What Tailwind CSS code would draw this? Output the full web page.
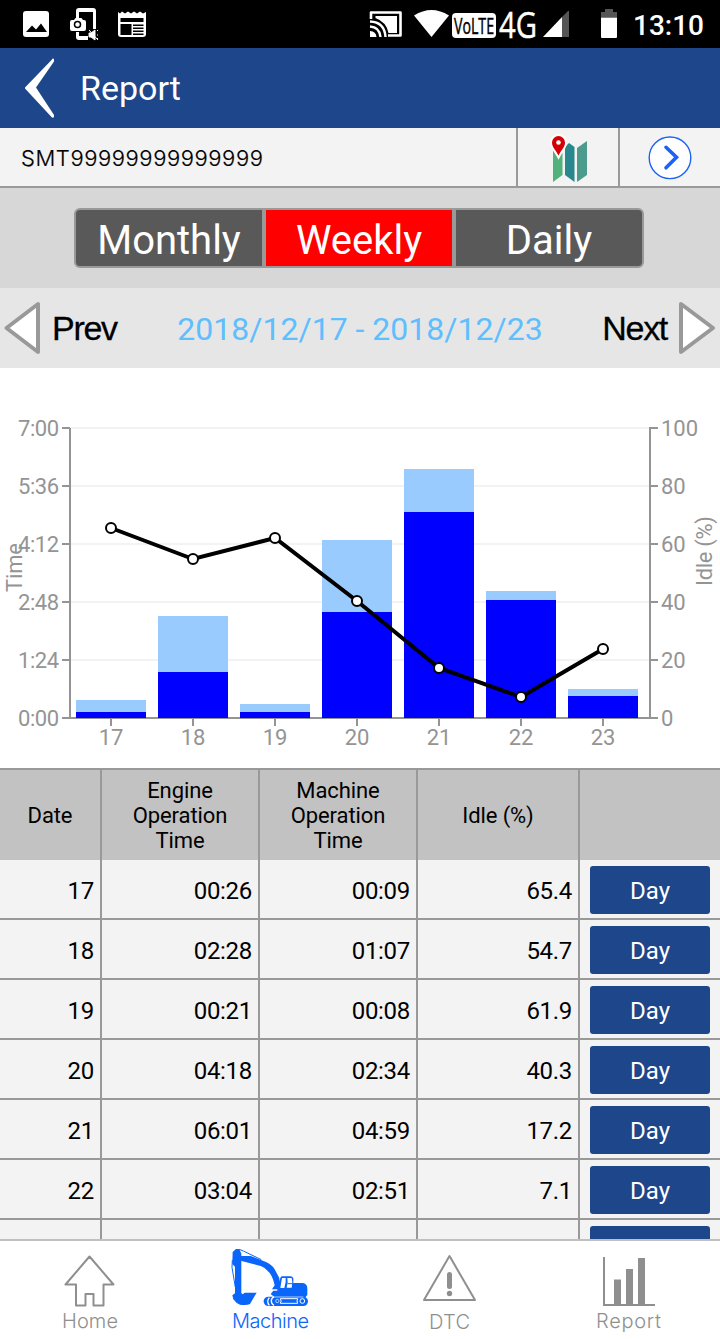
<!DOCTYPE html>
<html lang="en">
<head>
  <meta charset="UTF-8" />
  <meta name="viewport" content="width=device-width, initial-scale=1.0"/>
  <script src="https://cdn.jsdelivr.net/npm/@tailwindcss/browser@4"></script>
  <title>Report</title>
</head>

<body class="bg-white h-[1339px] w-[720px] overflow-hidden flex flex-col font-['Roboto',sans-serif] text-black">

  <!-- status bar -->
  <div class="h-12 shrink-0 bg-black text-white">
    <svg class="block w-[720px] h-12" viewBox="0 0 720 48" fill="#fff">
      <rect x="23" y="11" width="26" height="26" rx="3"/>
      <path d="M26 32l6-6.500 4 4 5-6 6 8.500z" fill="#000"/>
      <path d="M76 18V11q0-3 3-3h14q3 0 3 3v18h-3V12H79v6zM76 32h3v4h9v4h-9q-3 0-3-3z"/>
      <path d="M72 20h2l1.500-2h6l1.500 2h1q2 0 2 2v7q0 2-2 2H72q-2 0-2-2v-7q0-2 2-2z"/>
      <circle cx="77.500" cy="24.500" r="3" fill="none" stroke="#000" stroke-width="1.500"/>
      <path d="M89 33h2l4-3v10l-4-3h-2zM97 31l1-1M97 35h1M97 38l1 1M89 30l9 10" stroke="#fff" stroke-width="1"/>
      <path d="M118 12l2 1.500 2-2 3 2 3-2 3 2 3-2 3 2 3-2 3 2 3-1.500V34q0 3-3 3h-22q-3 0-3-3z"/>
      <path d="M120.500 18h23v4h-23zM120.500 24h11v11h-11zM133 24.500h10.500v1.500H133zM133 27.500h10.500V29H133zM133 30.500h10.500V32H133zM133 33.500h10.500V35H133z" fill="#000"/>
      <!-- cast -->
      <path d="M371 19v-6.500h29.500v23H388" fill="none" stroke="#fff" stroke-width="2.600" stroke-linejoin="round"/>
      <path d="M375.500 18v-2H397v17h-8.500q-2-11-13-15z"/>
      <path d="M370 21.500q14.500.5 15.500 15.500M370 26.500q9.500.5 10.500 10.500" fill="none" stroke="#fff" stroke-width="2.400"/>
      <path d="M370 31q6 .5 6.500 6H370z"/>
      <path d="M414 15.500q17.500-11 35 0L431.500 37z"/>
      <rect x="452" y="13" width="44" height="25" rx="4"/>
      <path d="M543 37l19-20v20z"/>
      <path d="M562 17l6-6h1v26h-7z" fill="#555"/>
      <path d="M605 9h8v3h4v5h-16v-5h4z" fill="#555"/>
      <path d="M601 17.500h16V37q0 1-1 1h-14q-1 0-1-1z"/>
      <text x="454" y="33.500" font-family="Open Sans" font-size="22" font-weight="500" fill="#000" stroke="#000" stroke-width="0.500" textLength="40" lengthAdjust="spacingAndGlyphs">VoLTE</text>
      <text x="499" y="37.500" font-family="Open Sans" font-size="36" stroke="#fff" stroke-width="0.500" textLength="38" lengthAdjust="spacingAndGlyphs">4G</text>
      <text x="633" y="35" font-family="Roboto" font-size="28" font-weight="500" textLength="71">13:10</text>
    </svg>
  </div>

  <!-- title bar -->
  <header class="h-20 shrink-0 bg-[#1e468a] text-white flex items-center">
    <svg class="w-20 h-20 shrink-0" viewBox="0 0 80 80" fill="#fff"><path d="M52 11.500q.5-1.500 2-.5v2.500L36 39.500 54 67v2q-1.500 1.500-2.500 0L25 40.500v-1z"/></svg>
    <h1 class="text-[34px] leading-10">Report</h1>
  </header>

  <!-- machine number -->
  <div class="h-[60px] shrink-0 bg-[#f3f3f3] border-b-2 border-[#999] flex">
    <div class="w-[516px] pl-[21px] pt-[3px] flex items-center font-['Inter'] font-light text-[22px] tracking-[0.560px] [-webkit-text-stroke:0.200px_#000]">SMT99999999999999</div>
    <div class="w-[102px] border-l-2 border-[#999]">
      <svg class="block w-[100px] h-[58px]" viewBox="518 128 100 58">
        <path d="M553 148l9.500 5v22L553 182z" fill="#52b27c"/>
        <path d="M565 147l4-4 5.500 4v35l-9.500-7z" fill="#29888d"/>
        <path d="M577 148l10-7v34l-10 7z" fill="#4b9c8c"/>
        <path d="M558.500 155.500C555 149 552 147 552 142.500a6.500 6.500 0 0113 0c0 4.500-3 6.500-6.500 13z" fill="#d50005" stroke="#fff" stroke-width="4" paint-order="stroke"/>
        <circle cx="558.500" cy="142.500" r="2.300" fill="#fff"/>
      </svg>
    </div>
    <div class="w-[102px] border-l-2 border-[#999]">
      <svg class="block w-[100px] h-[58px]" viewBox="620 128 100 58">
        <circle cx="670" cy="157.800" r="20.800" fill="#fff" stroke="#1b62f5" stroke-width="1.400"/>
        <path d="M666 147.300l10.500 10-10.500 10.500" fill="none" stroke="#1b62f5" stroke-width="3.600" stroke-linecap="round"/>
      </svg>
    </div>
  </div>

  <!-- period tabs -->
  <div class="h-[100px] shrink-0 bg-[#d7d7d7] flex justify-center pt-5 pr-[2px]">
    <div class="w-[570px] h-[60px] flex border-2 border-[#999] rounded-md overflow-hidden bg-[#595959] text-white text-[40px] leading-[61px] text-center">
      <div class="w-[186px]">Monthly</div>
      <div class="w-[194px] bg-[#f00] border-x-4 border-[#999]">Weekly</div>
      <div class="flex-1">Daily</div>
    </div>
  </div>

  <!-- date range -->
  <div class="h-20 shrink-0 bg-[#e6e6e6] flex items-center justify-between">
    <div class="flex items-center w-[160px]">
      <svg class="w-[52px] h-20 shrink-0" viewBox="0 0 52 80"><path d="M6.500 40L38 16v48z" fill="#fff" stroke="#999" stroke-width="4" stroke-linejoin="round"/></svg>
      <span class="font-['Liberation_Sans'] text-[34px] tracking-[-1.3px] [-webkit-text-stroke:0.300px_#000]">Prev</span>
    </div>
    <span class="text-[32px] text-[#5fbefd] pt-[2px] whitespace-nowrap">2018/12/17 - 2018/12/23</span>
    <div class="flex items-center justify-end w-[160px]">
      <span class="font-['Liberation_Sans'] text-[34px] tracking-[-1.3px] [-webkit-text-stroke:0.300px_#000] pr-px">Next</span>
      <svg class="w-[52px] h-20 shrink-0" viewBox="668 0 52 80"><path d="M713 40l-32-24v48z" fill="#fff" stroke="#999" stroke-width="4" stroke-linejoin="round"/></svg>
    </div>
  </div>

  <!-- chart -->
  <svg id="chart" class="block w-[720px] h-[400px] shrink-0" viewBox="0 368 720 400" font-family="Roboto" font-size="22" fill="#949494"></svg>

  <!-- table -->
  <div class="h-[471px] shrink-0 overflow-hidden bg-[#f3f3f3]">
    <div class="h-[92px] border-t-2 border-[#999] bg-[#c2c2c2] grid grid-cols-[102px_158px_158px_162px_140px] text-[22px] leading-[25px] tracking-[-0.100px] text-center">
      <div class="border-r-2 border-[#999] flex items-center justify-center pt-px">Date</div>
      <div class="border-r-2 border-[#999] flex items-center justify-center pt-px">Engine<br>Operation<br>Time</div>
      <div class="border-r-2 border-[#999] flex items-center justify-center pt-px">Machine<br>Operation<br>Time</div>
      <div class="border-r-2 border-[#999] flex items-center justify-center pt-px">Idle (%)</div>
      <div></div>
    </div>
    <div id="rows"></div>
  </div>

  <!-- bottom navigation -->
  <nav class="h-[100px] shrink-0 border-t-2 border-[#c0c0c0] bg-white">
    <svg class="block w-[720px] h-[98px]" viewBox="0 1241 720 98" fill="#8f8f8f" font-family="Inter" font-weight="300" font-size="20">
      <path d="M89.500 1256.500L65.500 1284.500h10.500v21h9.500V1294h8v11.500H103.500v-21h10z" fill="none" stroke="#8f8f8f" stroke-width="2" stroke-linejoin="round"/>
      <text x="62" y="1328" textLength="56">Home</text>

      <g fill="#0a66fa">
        <!-- excavator -->
        <g transform="translate(220 1240) scale(.3333)">
          <!-- stick and bucket -->
          <path d="M38 36L48 27h10l6 14v118l4 4 6-5h36l-6 10-14 24q-8 4-30 2-12-4-20-16l-3-12 8-6V80l-8-8z"/>
          <!-- boom -->
          <path d="M58 48L92 48L138 66Q156 74 164 88L178 114V148H156L164 136Q158 104 140 90Q134 82 122 78L62 62z"/>
          <!-- cab and body -->
          <path d="M172 138L182 112q1-3 5-3h24q7 0 9 6v14h28q14 2 14 16v20l-5 6h-94l-11-9 8-10h12z"/>
          <path d="M37 60l-1 22 10 60M58 28l12 5 54 26" fill="none" stroke="#0a66fa" stroke-width="3"/>
          <path d="M186 114h11v12l-4 18h-12zM202 114h13l2 12-2 17h-15l3-15z" fill="#fff"/>
          <path d="M203 131h13" stroke="#0a66fa" stroke-width="3"/>
          <rect x="131" y="170" width="133" height="28" rx="14"/>
          <path d="M148 173q-10 11 0 23M162 171q-8 3-8 12t8 13" fill="none" stroke="#fff" stroke-width="4"/>
          <path d="M181 176h52q-4 7 0 14h-52q5-7 0-14z" fill="none" stroke="#fff" stroke-width="3"/>
          <circle cx="172" cy="183" r="5" fill="none" stroke="#fff" stroke-width="2"/>
          <circle cx="247" cy="183" r="7" fill="none" stroke="#fff" stroke-width="3"/>
          <path d="M158 171h92" stroke="#fff" stroke-width="2"/>
        </g>
        <text x="232" y="1328" textLength="77">Machine</text>
      </g>

      <path d="M449.500 1256L424 1300h51z" fill="none" stroke="#8f8f8f" stroke-width="2" stroke-linejoin="round"/>
      <path d="M449.500 1274.500v12" stroke="#8f8f8f" stroke-width="5" stroke-linecap="round"/>
      <circle cx="449.500" cy="1293.500" r="2.700"/>
      <text x="429" y="1329" textLength="41">DTC</text>

      <path d="M603 1257h2v47h50v2h-52zM614 1279.500h7V1304h-7zM626 1269h7v35h-7zM638 1258h7v46h-7z"/>
      <text x="596" y="1328" textLength="65">Report</text>
    </svg>
  </nav>

  <script>
    const days = [
      { date: 17, engine: '00:26', machine: '00:09', idle: '65.4', top: 700, mid: 712, y: 528 },
      { date: 18, engine: '02:28', machine: '01:07', idle: '54.7', top: 616, mid: 672, y: 559 },
      { date: 19, engine: '00:21', machine: '00:08', idle: '61.9', top: 704, mid: 712, y: 538 },
      { date: 20, engine: '04:18', machine: '02:34', idle: '40.3', top: 540, mid: 612, y: 601 },
      { date: 21, engine: '06:01', machine: '04:59', idle: '17.2', top: 469, mid: 512, y: 668 },
      { date: 22, engine: '03:04', machine: '02:51', idle: '7.1', top: 591, mid: 600, y: 697 },
      { date: 23, engine: '', machine: '', idle: '', top: 689, mid: 696, y: 649 },
    ];

    // table rows, the last one is only partly visible
    document.getElementById('rows').innerHTML = days.map(d => `
      <div class="h-[60px] border-b-2 border-[#999] grid grid-cols-[102px_158px_158px_162px_140px] text-2xl leading-[62px] tracking-[-0.300px] text-right">
        <div class="border-r-2 border-[#999] pr-[6px]">${d.engine && d.date}</div>
        <div class="border-r-2 border-[#999] pr-[6px]">${d.engine}</div>
        <div class="border-r-2 border-[#999] pr-[6px]">${d.machine}</div>
        <div class="border-r-2 border-[#999] pr-[6px]">${d.idle}</div>
        <div class="pt-[6px] pl-[10px]"><button class="block w-[120px] h-12 rounded-[3px] bg-[#1e468a] text-white text-center leading-[50px] tracking-normal">${d.engine && 'Day'}</button></div>
      </div>`).join('');

    // chart
    const left = ['7:00', '5:36', '4:12', '2:48', '1:24', '0:00'];
    let svg = '';
    left.forEach((label, i) => {
      const y = 428 + i * 58;
      if (i < 5) svg += `<path d="M71 ${y}H649" stroke="#f3f3f3" stroke-width="2"/>`;
      svg += `<path d="M62 ${y}h8M650 ${y}h8" stroke="#949494" stroke-width="2"/>
        <text x="18" y="${y + 8}" textLength="41">${label}</text>
        <text x="661" y="${y + 8}">${100 - i * 20}</text>`;
    });
    svg += '<path d="M70 428V718H650V427" fill="none" stroke="#949494" stroke-width="2"/>';
    days.forEach((d, i) => {
      const x = 76 + i * 82;
      svg += `<rect x="${x}" y="${d.top}" width="70" height="${d.mid - d.top}" fill="#99cbff"/>
        <rect x="${x}" y="${d.mid}" width="70" height="${718 - d.mid}" fill="#00f"/>
        <path d="M${x + 35} 718v8" stroke="#949494" stroke-width="2"/>
        <text x="${x + 35}" y="745" text-anchor="middle">${d.date}</text>`;
    });
    svg += `<polyline points="${days.map((d, i) => (111 + i * 82) + ',' + d.y).join(' ')}" fill="none" stroke="#000" stroke-width="4"/>`;
    days.forEach((d, i) => {
      svg += `<circle cx="${111 + i * 82}" cy="${d.y}" r="5" fill="#fff" stroke="#000" stroke-width="2"/>`;
    });
    svg += `<text transform="translate(22 592) rotate(-90)" textLength="49">Time</text>
      <text transform="translate(712 586) rotate(-90)" textLength="70">Idle (%)</text>`;
    document.getElementById('chart').innerHTML = svg;
  </script>

</body>
</html>
